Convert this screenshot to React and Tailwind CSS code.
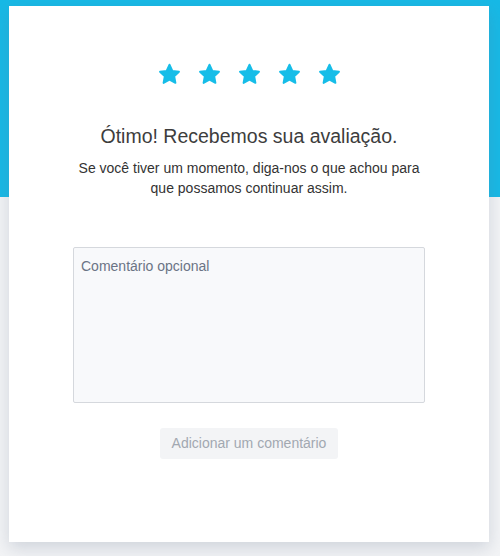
import React from 'react';

const StarIcon = ({ className = "w-[23px] h-[22px]" }) => (
  <svg className={className} viewBox="0 0 24 23" fill="currentColor" stroke="currentColor" strokeWidth="2" strokeLinejoin="round">
    <path d="M12 1.8l3 6.4 6.9.9-5 4.8 1.3 6.9L12 17.5l-6.2 3.3 1.3-6.9-5-4.8 6.9-.9z" />
  </svg>
);

const App = () => {
  return (
    <div className="relative w-[500px] h-[556px] bg-[#f3f4f6] overflow-hidden font-['Liberation_Sans',Arial,sans-serif]">
      {/* Top band */}
      <div className="absolute inset-x-0 top-0 h-[197px] bg-[#17b9e6]" />

      {/* Card */}
      <div className="relative mt-[6px] ml-[9px] w-[480px] h-[536px] bg-white shadow-[0_6px_16px_rgba(100,116,139,0.25)] flex flex-col items-center">
        <div className="flex gap-[17px] mt-[57px] text-[#16bde8]">
          <StarIcon />
          <StarIcon />
          <StarIcon />
          <StarIcon />
          <StarIcon />
        </div>

        <h1 className="mt-[39px] text-[19.5px] leading-6 text-[#3d3d3d]">Ótimo! Recebemos sua avaliação.</h1>
        <p className="mt-[10px] w-[360px] text-center text-[14px] leading-5 text-[#333]">
          Se você tiver um momento, diga-nos o que achou para que possamos continuar assim.
        </p>

        <textarea
          placeholder="Comentário opcional"
          className="mt-[49px] w-[352px] h-[156px] resize-none bg-[#f8f9fb] border border-[#d5d8dd] rounded-[2px] px-[7px] py-[8px] text-[14px] leading-5 text-[#333] placeholder:text-[#6b7485] outline-none"
        />

        <button
          disabled
          className="mt-[25px] px-3 h-[31px] bg-[#f3f4f6] rounded-[3px] text-[14px] text-[#a2a8b1]"
        >
          Adicionar um comentário
        </button>
      </div>
    </div>
  );
};

export default App;
